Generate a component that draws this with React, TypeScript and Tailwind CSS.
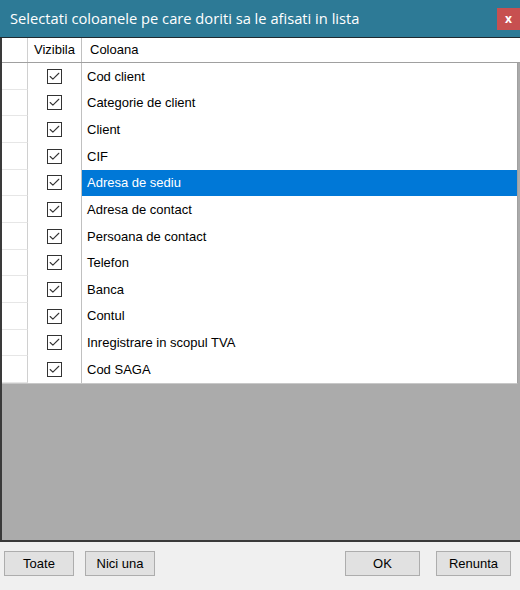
import { Check } from 'lucide-react'

const columns = [
  'Cod client',
  'Categorie de client',
  'Client',
  'CIF',
  'Adresa de sediu',
  'Adresa de contact',
  'Persoana de contact',
  'Telefon',
  'Banca',
  'Contul',
  'Inregistrare in scopul TVA',
  'Cod SAGA',
]

function CheckBox() {
  return (
    <div className="w-[15px] h-[15px] border border-[#333333] bg-white flex items-center justify-center">
      <Check size={13} strokeWidth={2} className="text-[#333333]" />
    </div>
  )
}

function Btn({ label, w }: { label: string; w: string }) {
  return (
    <button className={`${w} h-[25px] bg-[#e1e1e1] border border-[#adadad] text-[13px] text-black`}>
      {label}
    </button>
  )
}

export default function App() {
  const selected = 4

  return (
    <div className="w-[520px] h-[590px] flex flex-col bg-[#f0f0f0] font-['Liberation_Sans',Arial,sans-serif] overflow-hidden">
      {/* Title bar */}
      <div className="h-[37px] bg-[#2d7a96] flex items-center justify-between pl-[10px] shrink-0">
        <span className="text-white text-[14.7px] font-['Open_Sans',sans-serif]">
          Selectati coloanele pe care doriti sa le afisati in lista
        </span>
        <div className="w-[23px] h-[22px] bg-[#c75050] text-white text-[12px] font-bold flex items-center justify-center mt-[1px] font-['Open_Sans',sans-serif]">
          x
        </div>
      </div>
      <div className="h-[1px] bg-[#1f2a30] shrink-0" />

      {/* Grid */}
      <div className="h-[504px] border-l-2 border-b-2 border-[#3a3a3a] bg-[#ababab] flex flex-col shrink-0">
        <div className="h-[25px] bg-white flex border-b border-[#a0a0a0] text-[13px] text-black">
          <div className="w-[26px] border-r border-[#d0d0d0]" />
          <div className="w-[54px] border-r border-[#c0c0c0] flex items-center justify-center">Vizibila</div>
          <div className="flex-1 flex items-center pl-[8px]">Coloana</div>
        </div>
        <div className="bg-white mr-[2px] border-r border-[#a0a0a0] flex flex-col border-b border-b-[#c8c8c8]">
          {columns.map((c, i) => (
            <div key={c} className="h-[26.67px] flex text-[13px]">
              <div className="w-[26px] border-r border-[#d0d0d0] border-b border-b-[#e6e6e6]" />
              <div className="w-[54px] border-r border-[#c0c0c0] flex items-center justify-center">
                <CheckBox />
              </div>
              <div
                className={`flex-1 flex items-center pl-[5px] ${i === selected ? 'bg-[#0078d7] text-white' : 'text-black'}`}
              >
                {c}
              </div>
            </div>
          ))}
        </div>
      </div>

      {/* Footer */}
      <div className="flex items-center px-[4px] pt-[9px]">
        <div className="flex gap-[11px]">
          <Btn label="Toate" w="w-[70px]" />
          <Btn label="Nici una" w="w-[70px]" />
        </div>
        <div className="flex-1" />
        <div className="flex gap-[16px] pr-[5px]">
          <Btn label="OK" w="w-[75px]" />
          <Btn label="Renunta" w="w-[75px]" />
        </div>
      </div>
    </div>
  )
}
